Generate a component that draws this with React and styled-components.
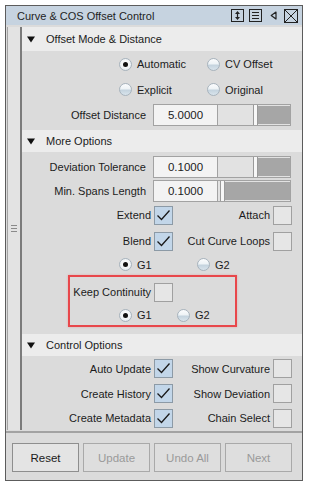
import styled, { createGlobalStyle } from "styled-components";

const GlobalStyle = createGlobalStyle`
  html, body { margin: 0; padding: 0; background: #fff; }
  body {
    font-family: "Liberation Sans", Arial, sans-serif;
    font-size: 11px;
    color: #1b1b1b;
  }
`;

const Window = styled.div`
  margin: 5px 0 0 5px;
  width: 298px;
  height: 476px;
  box-sizing: border-box;
  border: 1px solid #5c5c5c;
  background: #dbdbdb;
  display: flex;
  flex-direction: column;
`;

const TitleBar = styled.div`
  height: 19px;
  flex: none;
  background: #c6d3e0;
  display: flex;
  align-items: center;
  padding: 0 4px 0 11px;
  font-size: 11px;
  color: #1e1e1e;
`;

const Title = styled.span`
  flex: 1;
`;

const TitleIcons = styled.div`
  display: flex;
  align-items: center;
  svg {
    display: block;
  }
`;

const IconSlot = styled.span`
  margin-left: ${(p) => p.gap}px;
  display: flex;
`;

const Main = styled.div`
  margin-top: 2px;
  height: 403px;
  flex: none;
  display: flex;
`;

const Strip = styled.div`
  margin-left: 1px;
  width: 12px;
  flex: none;
  border-left: 1px solid #a3a3a3;
  border-right: 2px solid #7b7b7b;
  background: #e3e3e3;
  display: flex;
  align-items: center;
  justify-content: center;
`;

const Grip = styled.div`
  width: 6px;
  display: flex;
  flex-direction: column;
  gap: 2px;
  span {
    height: 1px;
    background: #8a8a8a;
  }
`;

const Content = styled.div`
  flex: 1;
  overflow: hidden;
  display: flex;
  flex-direction: column;
`;

const SectionHeader = styled.div`
  height: ${(p) => p.h}px;
  flex: none;
  background: #ececec;
  display: flex;
  align-items: center;
  padding-left: 5px;
  font-size: 11px;
  svg {
    margin-right: 11px;
  }
`;

const SectionBody = styled.div`
  padding: ${(p) => p.pt || 0}px 0 ${(p) => p.pb || 0}px;
  display: flex;
  flex-direction: column;
`;

const RadioRow = styled.div`
  height: ${(p) => p.h}px;
  padding-left: ${(p) => p.pl}px;
  display: flex;
  align-items: center;
`;

const RadioItem = styled.label`
  width: ${(p) => p.w}px;
  display: flex;
  align-items: center;
  gap: 5px;
`;

const RadioCircle = styled.span`
  width: 13px;
  height: 13px;
  box-sizing: border-box;
  border-radius: 50%;
  border: 1px solid #a7b3bd;
  flex: none;
  display: flex;
  align-items: center;
  justify-content: center;
  background: ${(p) =>
    p.on
      ? "radial-gradient(circle at 50% 40%, #ffffff 0%, #eef2f5 60%, #cfd9e1 100%)"
      : "linear-gradient(#fbfcfd 0%, #eef3f6 45%, #c4d3de 55%, #d9e4ec 100%)"};
  &::after {
    content: "";
    width: 5px;
    height: 5px;
    border-radius: 50%;
    background: #111;
    display: ${(p) => (p.on ? "block" : "none")};
  }
`;

const FieldRow = styled.div`
  height: ${(p) => p.h}px;
  display: flex;
  align-items: center;
`;

const FieldLabel = styled.span`
  width: 124px;
  margin-right: 7px;
  text-align: right;
  white-space: nowrap;
`;

const NumField = styled.div`
  width: 65px;
  height: 22px;
  box-sizing: border-box;
  border: 1px solid #a2a2a2;
  background: #f3f3f3;
  display: flex;
  align-items: center;
  justify-content: center;
  font-size: 11.5px;
`;

const Slider = styled.div`
  width: 73px;
  height: 22px;
  box-sizing: border-box;
  border: 1px solid #a2a2a2;
  border-left: none;
  background: #e2e2e2;
  display: flex;
`;

const SliderFill = styled.span`
  flex: none;
`;

const SliderHandle = styled.span`
  width: 3px;
  flex: none;
  background: #f7f7f7;
  border-left: 1px solid #9a9a9a;
  border-right: 1px solid #9a9a9a;
`;

const SliderRest = styled.span`
  flex: 1;
  background: #a6a6a6;
  margin: 1px 0;
`;

const CheckRow = styled.div`
  height: ${(p) => p.h}px;
  display: grid;
  grid-template-columns: ${(p) => p.lw}px 19px ${(p) => (p.right ? "94px 19px" : "")};
  column-gap: 3px;
  align-items: center;
`;

const CheckLabel = styled.span`
  text-align: right;
  white-space: nowrap;
`;

const CheckBox = styled.span`
  width: 19px;
  height: 19px;
  box-sizing: border-box;
  border: 1px solid ${(p) => (p.on ? "#8c9aa6" : "#a0a0a0")};
  background: ${(p) => (p.on ? "#c2d6e9" : "#e6e6e6")};
  display: flex;
  align-items: center;
  justify-content: center;
`;

const Highlight = styled.div`
  margin: 1px 0 7px 46px;
  width: 169px;
  box-sizing: border-box;
  border: 2px solid #e8474b;
  box-shadow: 0 0 2px rgba(232, 71, 75, 0.35);
  padding-bottom: 2px;
`;

const Footer = styled.div`
  margin-top: 1px;
  border-top: 2px solid #a2a2a2;
  flex: 1;
  padding: 10px 10px 0 6px;
  display: grid;
  grid-template-columns: repeat(4, 1fr);
  column-gap: 4px;
  align-content: start;
`;

const Button = styled.button`
  height: 29px;
  box-sizing: border-box;
  border: 1px solid ${(p) => (p.disabled ? "#a9a9a9" : "#8e8e8e")};
  background: ${(p) => (p.disabled ? "#dedede" : "#e4e4e4")};
  color: ${(p) => (p.disabled ? "#9a9a9a" : "#1b1b1b")};
  font-family: "Liberation Sans", Arial, sans-serif;
  font-size: 11.5px;
  padding: 0;
`;

const Tri = () => (
  <svg width="8" height="7" viewBox="0 0 8 7">
    <path d="M0 0.5 H8 L4 6.5 Z" fill="#111" />
  </svg>
);

const Check = () => (
  <svg width="15" height="13" viewBox="0 0 15 13">
    <path d="M1.5 6.5 L5.5 10.5 L13.5 1.5" fill="none" stroke="#1a1a1a" strokeWidth="1.3" />
  </svg>
);

const Radio = ({ on, label, w }) => (
  <RadioItem w={w}>
    <RadioCircle on={on} />
    <span>{label}</span>
  </RadioItem>
);

const Field = ({ label, value, at, h }) => (
  <FieldRow h={h}>
    <FieldLabel>{label}</FieldLabel>
    <NumField>{value}</NumField>
    <Slider>
      <SliderFill style={{ width: at }} />
      <SliderHandle />
      <SliderRest />
    </Slider>
  </FieldRow>
);

const Checks = ({ h, lw = 129, left, leftOn, right, rightOn }) => (
  <CheckRow h={h} lw={lw} right={!!right}>
    <CheckLabel>{left}</CheckLabel>
    <CheckBox on={leftOn}>{leftOn && <Check />}</CheckBox>
    {right && <CheckLabel>{right}</CheckLabel>}
    {right && <CheckBox on={rightOn}>{rightOn && <Check />}</CheckBox>}
  </CheckRow>
);

const TitleButtons = () => (
  <TitleIcons>
    <IconSlot gap={0}>
      <svg width="13" height="13" viewBox="0 0 13 13">
        <rect x="0.5" y="0.5" width="12" height="12" fill="none" stroke="#222" />
        <path d="M6.5 2 L9 5 H4 Z M6.5 11 L9 8 H4 Z" fill="#222" />
        <path d="M6.5 4 V9" stroke="#222" strokeWidth="1.2" />
      </svg>
    </IconSlot>
    <IconSlot gap={5}>
      <svg width="13" height="13" viewBox="0 0 13 13">
        <rect x="0.5" y="0.5" width="12" height="12" fill="none" stroke="#222" />
        <path d="M3 3.5 H10 M3 6.5 H10 M3 9.5 H10" stroke="#222" />
      </svg>
    </IconSlot>
    <IconSlot gap={8}>
      <svg width="7" height="9" viewBox="0 0 7 9">
        <path d="M6 1 L1.2 4.5 L6 8 Z" fill="none" stroke="#222" strokeWidth="1.2" strokeLinejoin="round" />
      </svg>
    </IconSlot>
    <IconSlot gap={7}>
      <svg width="14" height="14" viewBox="0 0 14 14">
        <rect x="0.5" y="0.5" width="13" height="13" fill="none" stroke="#222" />
        <path d="M1 1 L13 13 M13 1 L1 13" stroke="#222" />
      </svg>
    </IconSlot>
  </TitleIcons>
);

export default function App() {
  return (
    <>
      <GlobalStyle />
      <Window>
        <TitleBar>
          <Title>Curve &amp; COS Offset Control</Title>
          <TitleButtons />
        </TitleBar>
        <Main>
          <Strip>
            <Grip>
              <span />
              <span />
              <span />
            </Grip>
          </Strip>
          <Content>
            <SectionHeader h={24}>
              <Tri />
              Offset Mode &amp; Distance
            </SectionHeader>
            <SectionBody pb={2}>
              <RadioRow h={26} pl={97}>
                <Radio on label="Automatic" w={88} />
                <Radio label="CV Offset" w={88} />
              </RadioRow>
              <RadioRow h={25} pl={97}>
                <Radio label="Explicit" w={88} />
                <Radio label="Original" w={88} />
              </RadioRow>
              <Field h={26} label="Offset Distance" value="5.0000" at={35} />
            </SectionBody>

            <SectionHeader h={22}>
              <Tri />
              More Options
            </SectionHeader>
            <SectionBody pt={2}>
              <Field h={25} label="Deviation Tolerance" value="0.1000" at={35} />
              <Field h={24} label="Min. Spans Length" value="0.1000" at={2} />
              <Checks h={24} left="Extend" leftOn right="Attach" />
              <Checks h={28} left="Blend" leftOn right="Cut Curve Loops" />
              <RadioRow h={19} pl={97}>
                <Radio on label="G1" w={78} />
                <Radio label="G2" w={78} />
              </RadioRow>
              <Highlight>
                <Checks h={30} lw={81} left="Keep Continuity" />
                <RadioRow h={16} pl={49}>
                  <Radio on label="G1" w={78} />
                  <Radio label="G2" w={78} />
                </RadioRow>
              </Highlight>
            </SectionBody>

            <SectionHeader h={22}>
              <Tri />
              Control Options
            </SectionHeader>
            <SectionBody>
              <Checks h={25} left="Auto Update" leftOn right="Show Curvature" />
              <Checks h={25} left="Create History" leftOn right="Show Deviation" />
              <Checks h={24} left="Create Metadata" leftOn right="Chain Select" />
            </SectionBody>
          </Content>
        </Main>
        <Footer>
          <Button>Reset</Button>
          <Button disabled>Update</Button>
          <Button disabled>Undo All</Button>
          <Button disabled>Next</Button>
        </Footer>
      </Window>
    </>
  );
}
